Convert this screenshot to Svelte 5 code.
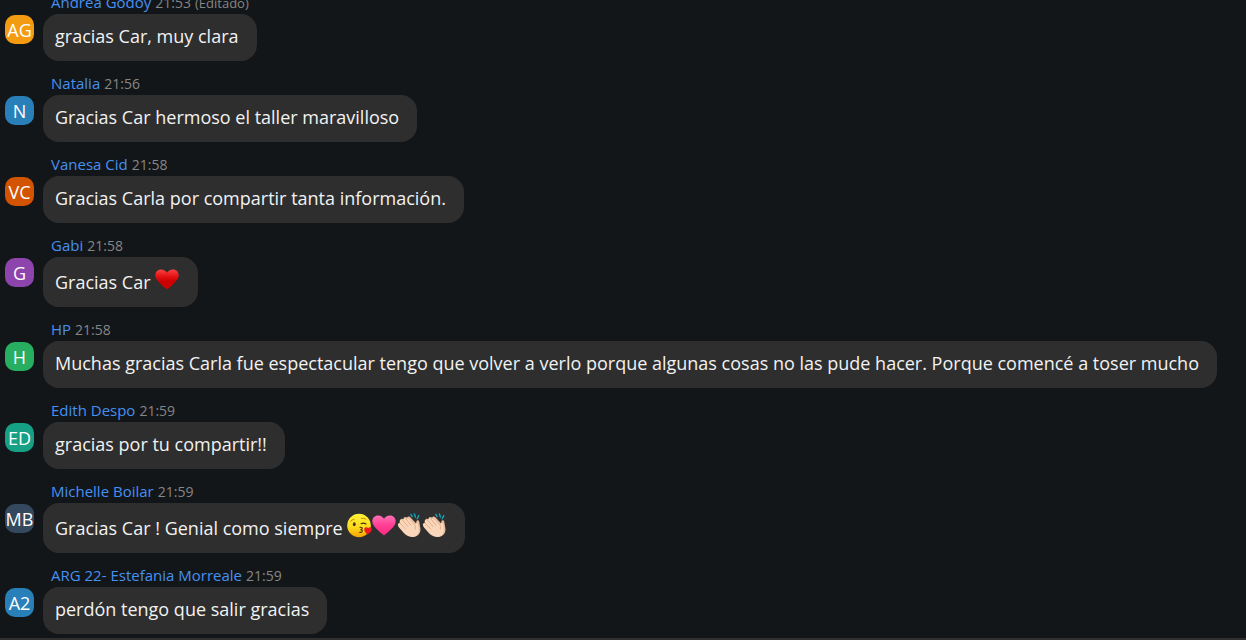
<script>
  const messages = [
    { name: "Andrea Godoy", time: "21:53", edited: true, initials: "AG", color: "#f39c12", text: "gracias Car, muy clara" },
    { name: "Natalia", time: "21:56", initials: "N", color: "#2980b9", text: "Gracias Car hermoso el taller maravilloso" },
    { name: "Vanesa Cid", time: "21:58", initials: "VC", color: "#d35400", text: "Gracias Carla por compartir tanta información." },
    { name: "Gabi", time: "21:58", initials: "G", color: "#8e44ad", text: "Gracias Car", emojis: ["heart"] },
    { name: "HP", time: "21:58", initials: "H", color: "#27ae60", text: "Muchas gracias Carla fue espectacular tengo que volver a verlo porque algunas cosas no las pude hacer. Porque comencé a toser mucho" },
    { name: "Edith Despo", time: "21:59", initials: "ED", color: "#16a085", text: "gracias por tu compartir!!" },
    { name: "Michelle Boilar", time: "21:59", initials: "MB", color: "#34495e", text: "Gracias Car ! Genial como siempre", emojis: ["kiss", "pink", "clap", "clap"] },
    { name: "ARG 22- Estefania Morreale", time: "21:59", initials: "A2", color: "#2980b9", text: "perdón tengo que salir gracias" },
  ];

  const labels = { heart: "corazón rojo", pink: "corazón rosa", kiss: "beso", clap: "aplausos" };
</script>

<!-- gradients shared by the emojis -->
<svg class="defs" width="0" height="0" aria-hidden="true">
  <defs>
    <linearGradient id="red" x1="0" y1="0" x2="0" y2="1">
      <stop offset="0" stop-color="#ff4242" />
      <stop offset="0.35" stop-color="#e31212" />
      <stop offset="0.6" stop-color="#c90000" />
      <stop offset="1" stop-color="#d40000" />
    </linearGradient>
    <linearGradient id="rose" x1="0" y1="0" x2="0" y2="1">
      <stop offset="0" stop-color="#ff72b4" />
      <stop offset="0.5" stop-color="#ff3d93" />
      <stop offset="1" stop-color="#ff2a80" />
    </linearGradient>
    <linearGradient id="face" x1="0" y1="0" x2="0" y2="1">
      <stop offset="0" stop-color="#fff23a" />
      <stop offset="0.55" stop-color="#ffdc1e" />
      <stop offset="1" stop-color="#f5a300" />
    </linearGradient>
  </defs>
</svg>

<main class="chat">
  {#each messages as message}
    <article class="message">
      <div class="avatar" style="background-color: {message.color}">{message.initials}</div>
      <div class="body">
        <header>
          <span class="name">{message.name}</span>
          <time>{message.time}</time>
          {#if message.edited}<span class="edited">(Editado)</span>{/if}
        </header>
        <div class="bubble">
          <span>{message.text}</span>
          {#if message.emojis}
            <span class="emojis">
              {#each message.emojis as emoji}
                <svg viewBox="0 0 25 25" role="img" aria-label={labels[emoji]}>
                  {#if emoji === "heart" || emoji === "pink"}
                    <path
                      fill={emoji === "heart" ? "url(#red)" : "url(#rose)"}
                      d="M12 22.5C9 19.8 .3 13.5 .3 8.5C.3 4.8 2.9 2.5 6 2.5C8.7 2.5 10.9 3.8 12 5.8C13.1 3.8 15.3 2.5 18 2.5C21.1 2.5 23.7 4.8 23.7 8.5C23.7 13.5 15 19.8 12 22.5Z"
                    />
                  {:else if emoji === "kiss"}
                    <circle cx="12" cy="12.5" r="11.8" fill="url(#face)" />
                    <path d="M3.5 8.3Q4.8 6.4 7 6.4M14.5 5.4Q17 4.6 19 6.2" fill="none" stroke="#c98b08" stroke-width="1" stroke-linecap="round" />
                    <ellipse cx="7.3" cy="11.2" rx="1.4" ry="2" fill="#47320d" />
                    <path d="M14.2 10.6Q16.6 9.6 19 11" fill="none" stroke="#47320d" stroke-width="1.2" stroke-linecap="round" />
                    <path d="M13 14.2Q16 14.3 15 16L13.8 16.8Q16 17.3 15 18.8Q14.2 19.6 12.6 19.3" fill="none" stroke="#47320d" stroke-width="1.1" stroke-linecap="round" stroke-linejoin="round" />
                    <path d="M20.4 21.4C18.6 19.8 16.9 17.8 17.3 15.9C17.8 13.8 20.2 13.7 21.2 15.1C22.5 13.6 25 14.3 24.9 16.4C24.8 18.6 22.2 20 20.4 21.4Z" fill="#f01824" />
                  {:else}
                    <path d="M15.2 3.6L13.8 1.4M18.4 4L17.4 1M20.2 5.8L21.8 2.6" stroke="#16a4b4" stroke-width="1.4" stroke-linecap="round" />
                    <!-- back hand -->
                    <path
                      fill="#e9bd9c"
                      d="M3 7.5C3.4 5.6 5 5.2 6.4 6.2L6.6 5C7.4 3.6 9 3.6 10 4.6C11 3.2 12.6 3.4 13.6 4.6L19.2 10.4L19.4 8.2C20 6.8 21.8 7 22.2 8.6L23.4 15.4C24 20.2 20.6 23.8 16 24L9 19Z"
                    />
                    <!-- front hand -->
                    <path
                      fill="#fad7ba"
                      d="M1 12.4C.4 11 1.6 9.6 3 10L2.6 8.6C2.4 6.8 4.4 6 5.6 7.2L6.2 6.4C7.2 5.2 8.4 5.4 9.4 6.4L10.4 6C11.4 5.6 12.2 6.2 13 7L18.4 13.2L18.6 11C19 9.4 20.8 9.6 21.2 11.2L21.8 16.4C22 21 19 24 14.8 24C11 24 8.6 22 6.4 19.6L1.8 14.2Z"
                    />
                    <path d="M3 10L8.6 16M5.6 7.2L11 13.6M9.4 6.4L14 12.2M18.4 13.2V16" fill="none" stroke="#d9a583" stroke-width=".8" stroke-linecap="round" />
                  {/if}
                </svg>
              {/each}
            </span>
          {/if}
        </div>
      </div>
    </article>
  {/each}
</main>

<style>
  :global(body) {
    margin: 0;
    background: #131619;
  }

  .defs {
    position: absolute;
  }

  /* newest message stays at the bottom, older ones run off the top */
  .chat {
    display: flex;
    flex-direction: column;
    justify-content: flex-end;
    gap: 13px;
    height: 100vh;
    box-sizing: border-box;
    padding: 0 5px 4px;
    border-bottom: 2px solid #303030;
    overflow: hidden;
    font-family: "Segoe UI", "Open Sans", "Noto Sans", sans-serif;
  }

  .message {
    display: flex;
    flex-shrink: 0;
    gap: 9px;
  }

  .avatar {
    flex-shrink: 0;
    width: 29px;
    height: 29px;
    margin-top: 22px;
    border-radius: 10px;
    color: #fff;
    font-size: 18px;
    line-height: 30px;
    display: flex;
    justify-content: center;
  }

  .body {
    display: flex;
    flex-direction: column;
    align-items: flex-start;
    gap: 2px;
    min-width: 0;
  }

  header {
    display: flex;
    align-items: baseline;
    gap: 4px;
    height: 19px;
    padding-left: 8px;
    line-height: 19px;
    white-space: nowrap;
  }

  .name {
    color: #4690f0;
    font-size: 15px;
  }

  time {
    color: #868686;
    font-size: 14px;
  }

  .edited {
    color: #868686;
    font-size: 13px;
  }

  .bubble {
    display: flex;
    align-items: flex-end;
    gap: 4px;
    padding: 9px 18px 11px 12px;
    border-radius: 16px;
    background: #2e2e2e;
    color: #f2f2f2;
    font-size: 18px;
    line-height: 27px;
  }

  .emojis {
    display: flex;
    padding: 1px 0 4px;
  }

  svg {
    display: block;
    width: 25px;
    height: 25px;
  }
</style>
